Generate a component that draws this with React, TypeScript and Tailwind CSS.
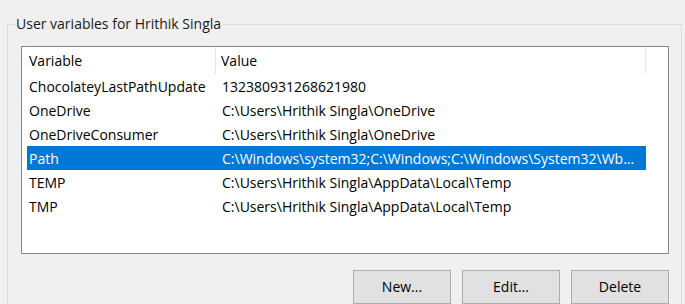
const rows = [
  { name: 'ChocolateyLastPathUpdate', value: '132380931268621980' },
  { name: 'OneDrive', value: 'C:\\Users\\Hrithik Singla\\OneDrive' },
  { name: 'OneDriveConsumer', value: 'C:\\Users\\Hrithik Singla\\OneDrive' },
  { name: 'Path', value: 'C:\\Windows\\system32;C:\\Windows;C:\\Windows\\System32\\Wb...' },
  { name: 'TEMP', value: 'C:\\Users\\Hrithik Singla\\AppData\\Local\\Temp' },
  { name: 'TMP', value: 'C:\\Users\\Hrithik Singla\\AppData\\Local\\Temp' },
]

const selected = 'Path'

export default function App() {
  return (
    <div
      className="w-[685px] h-[304px] overflow-hidden bg-[#f0f0f0] text-black text-[14px] pt-[14px] pl-[7px] pr-[3px]"
      style={{ fontFamily: '"Open Sans", "Noto Sans", sans-serif' }}
    >
      <fieldset className="border border-[#dcdcdc] pl-[13px] pr-[12px] pt-[23px] pb-[10px] h-[320px]">
        <legend className="-ml-[6px] px-[1px] leading-[20px] text-[#1a1a1a]">User variables for Hrithik Singla</legend>

        <div className="border border-[#828790] bg-white h-[208px] -mt-[11px]">
          <div className="flex h-[27px] items-center">
            <div className="w-[194px] pl-[7px] h-full flex items-center border-r border-[#e5e5e5]">Variable</div>
            <div className="w-[430px] pl-[5px] h-full flex items-center border-r border-[#e5e5e5]">Value</div>
          </div>
          {rows.map((r) => (
            <div
              key={r.name}
              className={`ml-[5px] w-[619px] h-[24px] flex items-center whitespace-nowrap ${
                r.name === selected ? 'bg-[#0078d7] text-white' : ''
              }`}
            >
              <div className="w-[189px] pl-[2px]">{r.name}</div>
              <div className="pl-[6px]">{r.value}</div>
            </div>
          ))}
        </div>

        <div className="flex justify-end gap-[11px] mt-[16px]">
          {['New...', 'Edit...', 'Delete'].map((label) => (
            <button
              key={label}
              className="w-[98px] h-[34px] border border-[#adadad] bg-[#e1e1e1] pb-[2px]"
            >
              {label}
            </button>
          ))}
        </div>
      </fieldset>
    </div>
  )
}
